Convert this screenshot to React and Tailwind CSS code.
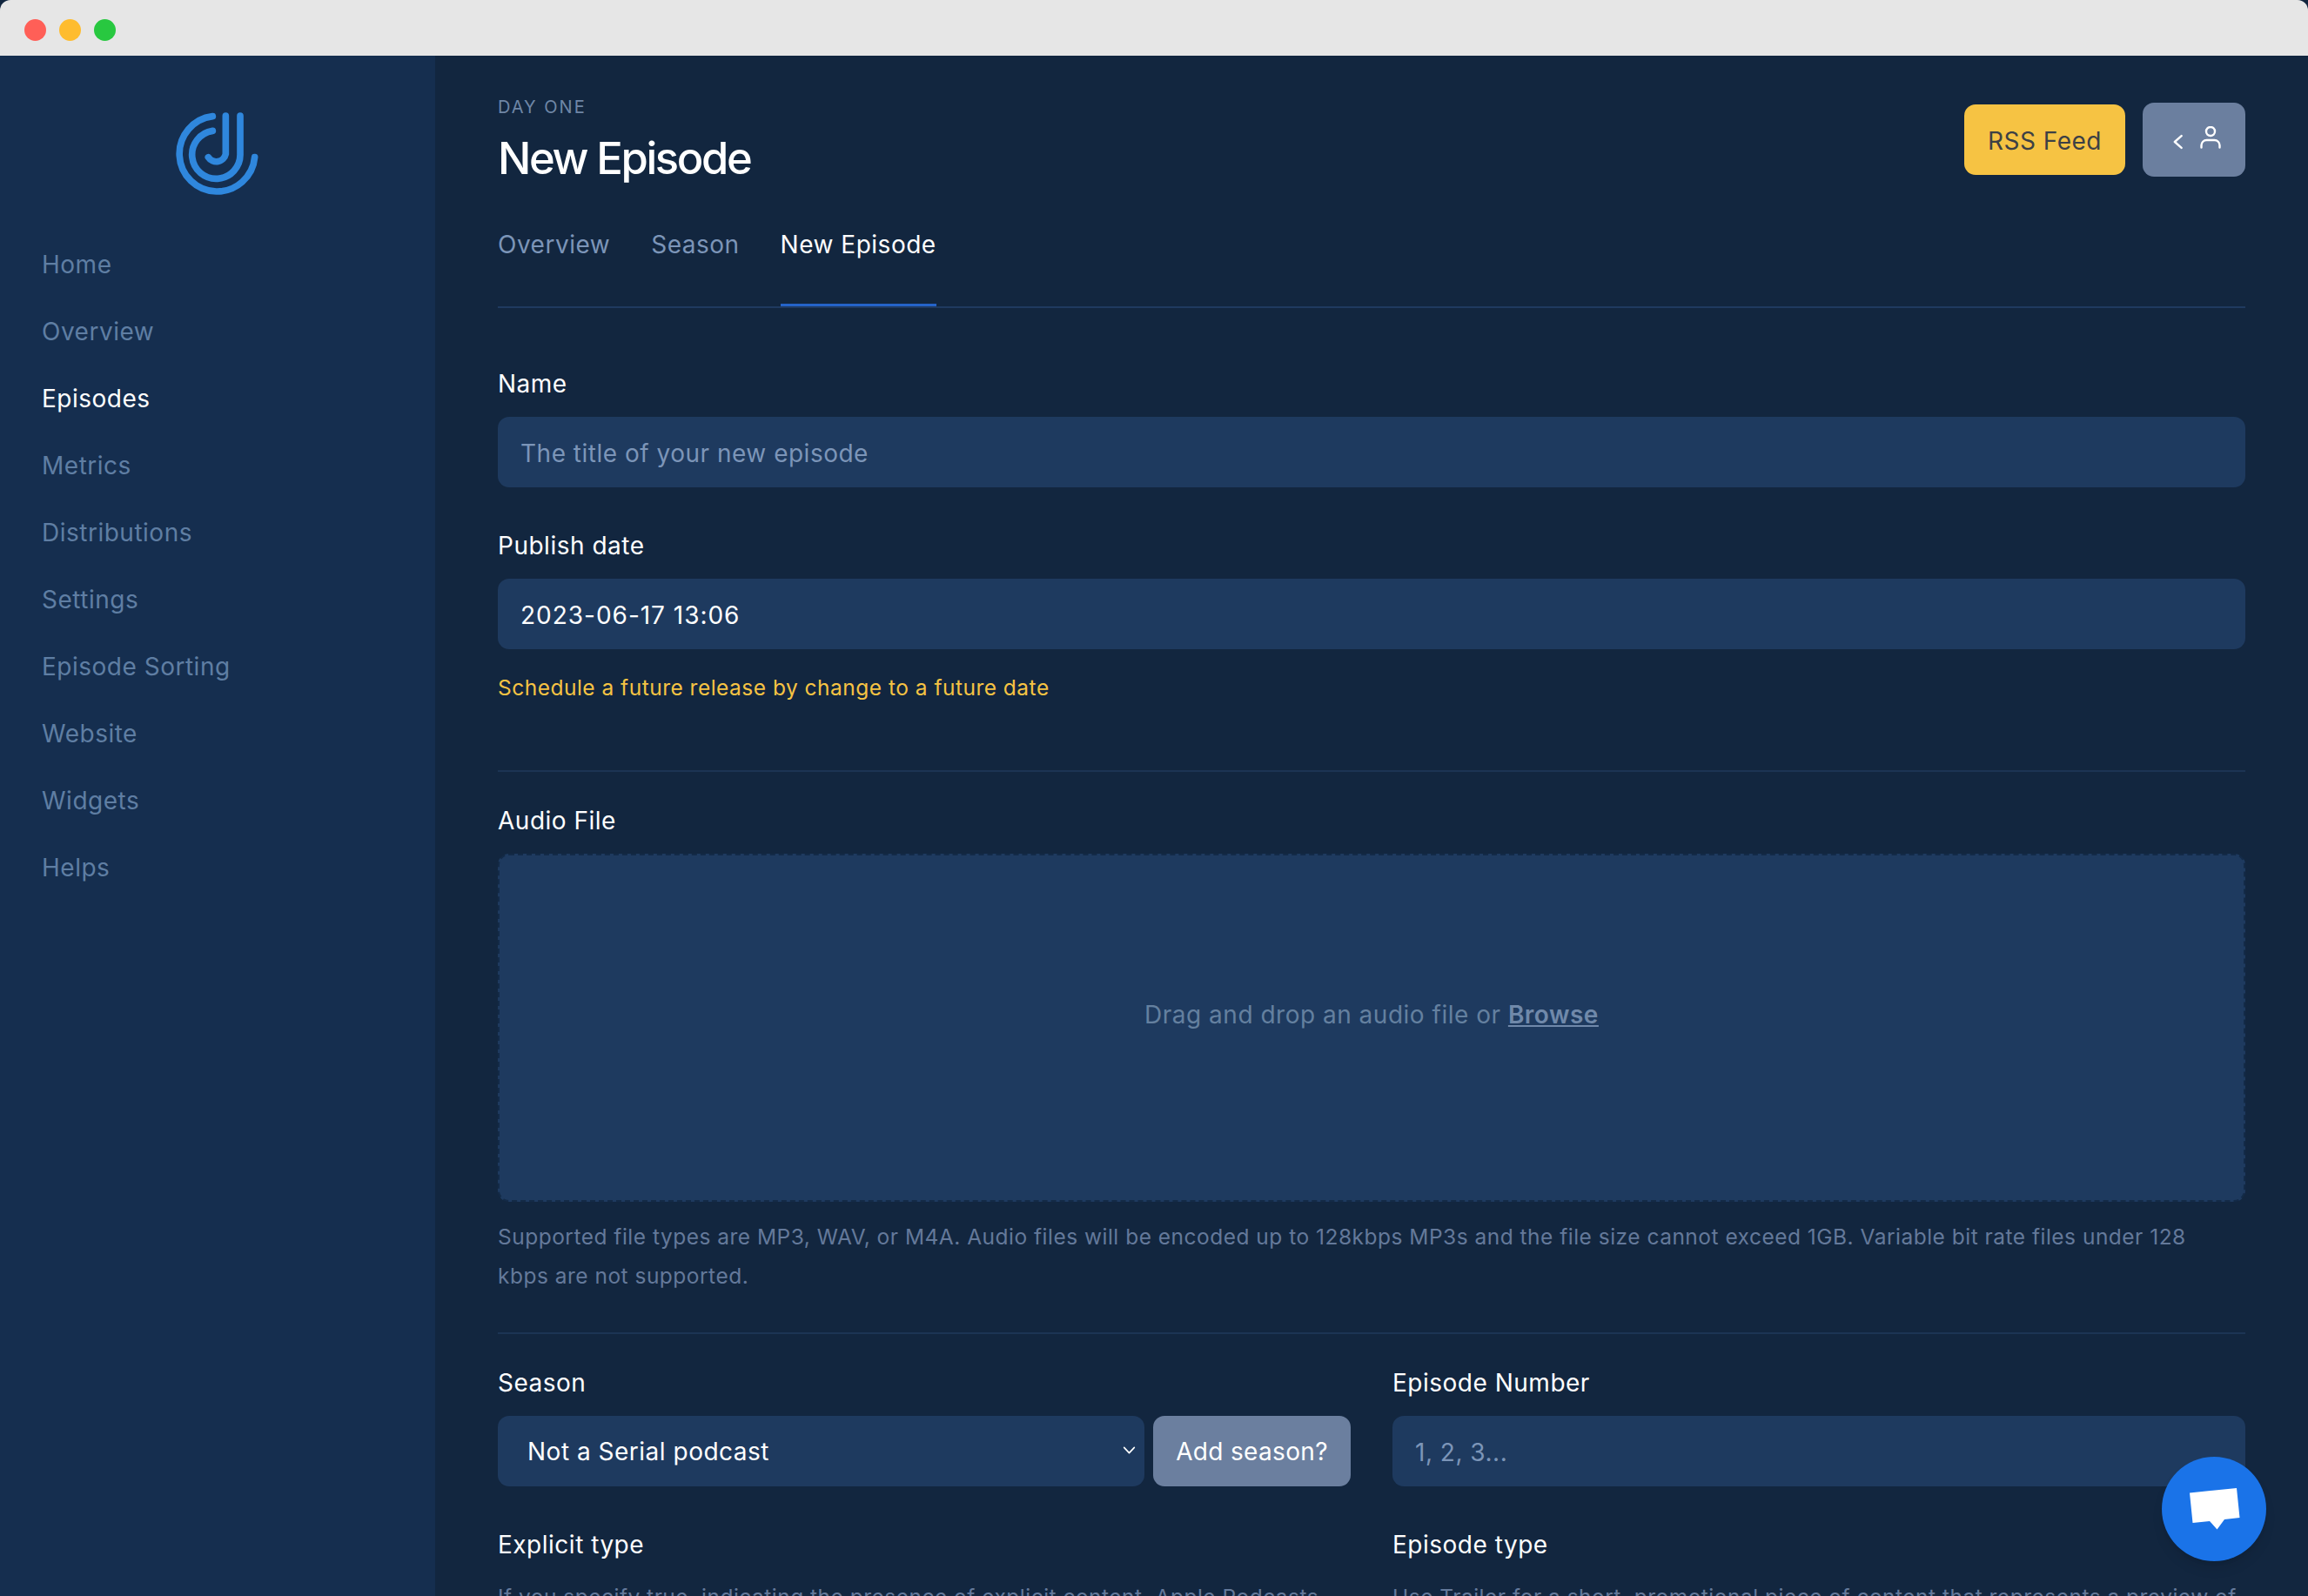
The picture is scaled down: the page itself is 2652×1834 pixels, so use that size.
import { useState } from "react";

const navItems = ["Home", "Overview", "Episodes", "Metrics", "Distributions", "Settings", "Episode Sorting", "Website", "Widgets", "Helps"];

function Logo() {
  return (
    <svg viewBox="150 110 300 300" className="w-[100px] h-[100px]" fill="none" stroke="#2f87dd" strokeWidth="23" strokeLinecap="round">
      <path d="M283 127A130 130 0 1 0 428 268" />
      <path d="M283 177A83 83 0 1 0 378 257L378 125" />
      <path d="M328 125L328 257A33 33 0 0 1 268 268" />
    </svg>
  );
}

function Label({ children }) {
  return <label className="block h-[40px] leading-[41px] mb-[18px] text-[28px] tracking-[0.018em] text-white">{children}</label>;
}

function TextInput({ placeholder, value }) {
  return (
    <input
      type="text"
      placeholder={placeholder}
      defaultValue={value}
      className={`block w-full h-[81px] px-[26px] pt-[2px] rounded-[13px] bg-[#1e3a5f] text-[28px] text-white placeholder:text-[#7c95b8] outline-0 ${value ? "tracking-[0.035em]" : "tracking-[0.018em]"}`}
    />
  );
}

export default function App() {
  const [season, setSeason] = useState("none");

  return (
    <div className="relative h-[1834px] overflow-hidden bg-[#12263f] font-['Inter',sans-serif]">
      <div className="h-16 pt-1 bg-[#e6e6e6] rounded-t-[12px] flex items-center gap-[15px] pl-[28px]">
        <span className="w-[25px] h-[25px] rounded-full bg-[#ff5f57]"></span>
        <span className="w-[25px] h-[25px] rounded-full bg-[#febc2e]"></span>
        <span className="w-[25px] h-[25px] rounded-full bg-[#28c840]"></span>
      </div>

      <div className="flex h-[1770px]">
        <aside className="w-[500px] shrink-0 bg-[#152e4f]">
          <div className="flex justify-center pt-[64px] pb-[38px]">
            <Logo />
          </div>
          <nav className="pl-[48px] flex flex-col">
            {navItems.map((item) => (
              <a key={item} className={`h-[77px] leading-[77px] text-[28px] tracking-[0.018em] ${item === "Episodes" ? "text-white" : "text-[#5f7ea3]"}`}>
                {item}
              </a>
            ))}
          </nav>
        </aside>

        <main className="flex-1 min-w-0 pl-[72px] pr-[72px] overflow-hidden">
          <div className="flex justify-between items-start">
            <div className="pt-[42px]">
              <div className="h-[34px] leading-[34px] text-[20px] tracking-[0.1em] uppercase text-[#6f86a6]">Day One</div>
              <h1 className="mt-[11px] h-[60px] leading-[62px] text-[50.7px] font-medium tracking-[-0.047em] text-white">New Episode</h1>
            </div>
            <div className="flex items-center gap-[20px] pt-[54px]">
              <button className="h-[81px] px-[27px] pt-[3px] rounded-[13px] bg-[#f6c343] text-[28px] tracking-[0.018em] text-[#3d4045]">RSS Feed</button>
              <button className="w-[118px] h-[85px] rounded-[13px] bg-[#6b7f9f] flex items-center justify-center gap-[20px] pl-[6px] text-white">
                <svg viewBox="0 0 12 18" className="w-[11px] h-[18px] mt-[4px]" fill="none" stroke="currentColor" strokeWidth="2.6" strokeLinecap="round" strokeLinejoin="round">
                  <path d="M10.5 1.5L2 9l8.5 7.5" />
                </svg>
                <svg viewBox="0 0 24 26" className="w-[24px] h-[26px] -mt-[6px]" fill="none" stroke="currentColor" strokeWidth="2.4" strokeLinecap="round">
                  <circle cx="12" cy="6" r="5" />
                  <path d="M1.5 24.5V22a6 6 0 0 1 6-6h9a6 6 0 0 1 6 6v2.5" />
                </svg>
              </button>
            </div>
          </div>

          <div className="mt-[50px] flex gap-[47px] border-b-2 border-[#1f3a60] text-[28px] tracking-[0.018em]">
            <a className="h-[91px] leading-[40px] text-[#7c95b8]">Overview</a>
            <a className="h-[91px] leading-[40px] text-[#7c95b8]">Season</a>
            <a className="h-[91px] leading-[40px] text-white border-b-[3px] border-[#2563c9]">New Episode</a>
          </div>

          <div className="mt-[67px]">
            <Label>Name</Label>
            <TextInput placeholder="The title of your new episode" />
          </div>

          <div className="mt-[47px]">
            <Label>Publish date</Label>
            <TextInput value="2023-06-17 13:06" />
            <p className="mt-[27px] h-[34px] leading-[34px] text-[24.5px] tracking-[0.02em] text-[#f6c343]">Schedule a future release by change to a future date</p>
          </div>

          <div className="mt-[78px] border-t-2 border-[#1c3454]"></div>

          <div className="mt-[36px]">
            <Label>Audio File</Label>
            <div className="h-[400px] pb-[30px] rounded-[13px] bg-[#1e3a5f] border-2 border-dashed border-[#132a47] flex items-center justify-center text-[28px] tracking-[0.018em] text-[#64809f]">
              <span>
                Drag and drop an audio file or <a className="font-semibold underline text-[#7089aa]">Browse</a>
              </span>
            </div>
            <p className="mt-[18px] leading-[45px] text-[24.5px] tracking-[0.02em] text-[#64799a]">
              Supported file types are MP3, WAV, or M4A. Audio files will be encoded up to 128kbps MP3s and the file size cannot exceed 1GB. Variable bit rate files under 128
              <br />
              kbps are not supported.
            </p>
          </div>

          <div className="mt-[42px] border-t-2 border-[#1c3454]"></div>

          <div className="mt-[36px] grid grid-cols-2 gap-x-[48px]">
            <div>
              <Label>Season</Label>
              <div className="flex gap-[10px]">
                <div className="relative flex-1 min-w-0">
                  <select
                    value={season}
                    onChange={(e) => setSeason(e.target.value)}
                    className="block w-full h-[81px] pl-[34px] pr-[40px] rounded-[13px] bg-[#1e3a5f] text-[28px] tracking-[0.018em] text-white appearance-none outline-0"
                  >
                    <option value="none">Not a Serial podcast</option>
                  </select>
                  <svg viewBox="0 0 16 10" className="absolute right-[10px] top-[35px] w-[15px] h-[9px] pointer-events-none" fill="none" stroke="#ffffff" strokeWidth="1.8" strokeLinecap="round" strokeLinejoin="round">
                    <path d="M1.5 1.5L8 8.5l6.5-7" />
                  </svg>
                </div>
                <button className="w-[227px] h-[81px] pt-[1px] rounded-[13px] bg-[#6b7f9f] text-[28px] tracking-[0.012em] text-white">Add season?</button>
              </div>
            </div>
            <div>
              <Label>Episode Number</Label>
              <TextInput placeholder="1, 2, 3..." />
            </div>
            <div className="mt-[47px]">
              <Label>Explicit type</Label>
              <p className="mt-[18px] leading-[45px] text-[24.5px] tracking-[0.02em] text-[#64799a]">
                If you specify true, indicating the presence of explicit content, Apple Podcasts
              </p>
            </div>
            <div className="mt-[47px]">
              <Label>Episode type</Label>
              <p className="mt-[18px] leading-[45px] text-[24.5px] tracking-[0.02em] text-[#64799a]">
                Use Trailer for a short, promotional piece of content that represents a preview of
              </p>
            </div>
          </div>
        </main>
      </div>

      <button className="absolute left-[2484px] top-[1674px] w-[120px] h-[120px] rounded-full bg-[#1a73e8] shadow-lg flex items-center justify-center">
        <svg viewBox="0 0 60 50" className="w-[60px] h-[50px]" fill="#ffffff">
          <path d="M2 6.500L56 1l3.500 34-17.500 2-8.500 11.500-8.500-9.500-19.500 2z" />
        </svg>
      </button>
    </div>
  );
}
